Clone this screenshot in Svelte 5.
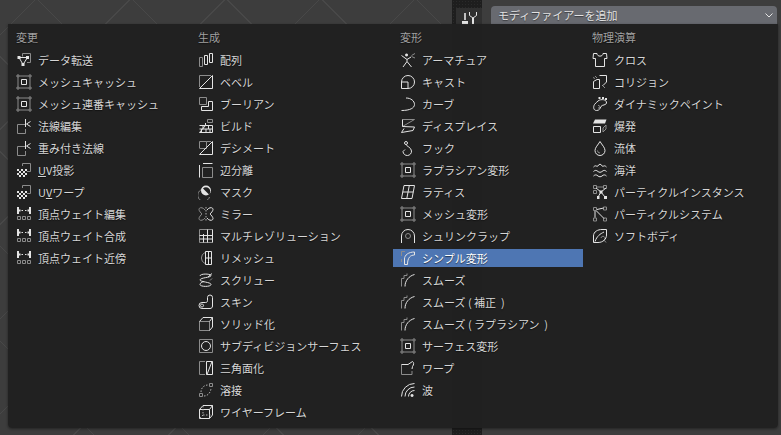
<script>
	// d = bright strokes, dim = grey strokes, fill = solid shapes
	const icons = {
		transfer: { dim: 'M6.5 4.5V1.5H14.5V10.5H11', d: 'M3 5.5H11.5L7 12.5Z', fill: 'M1.5 4h3v3h-3zM10 4h3v3h-3zM5.5 11h3v3h-3z' },
		mesh: { dim: 'M3.5 2H12.5M14 3.5V12.5M12.5 14H3.5M2 12.5V3.5M1 1h2v2H1zM13 1h2v2h-2zM13 13h2v2h-2zM1 13h2v2H1z', d: 'M5.5 5.5h5v5h-5z' },
		normal: { dim: 'M9.5 6.5H1.5V15.5H9.5V11', d: 'M9.5 1V9M14.5 3.5L10.5 6L14.5 8.5' },
		uv: { dim: 'M6.5 4V1.5H14.5V9.5H11', fill: 'M1 7h2v2H1zM5 7h2v2H5zM9 7h2v2H9zM3 9h2v2H3zM7 9h2v2H7zM1 11h2v2H1zM5 11h2v2H5zM9 11h2v2H9zM3 13h2v2H3zM7 13h2v2H7z' },
		weight: { d: 'M5.5 4.5H7M9 4.5H10.5', dim: 'M1.5 10.5h3v3h-3zM6.5 10.5h3v3h-3zM11.5 10.5h3v3h-3z', fill: 'M1 1h2v7H1zM13 1h2v7h-2zM3 3.5h1.5v2H3zM11.5 3.5H13v2h-1.5z' },
		array: { dim: 'M1.5 5.5h3v9h-3z', d: 'M6.5 3.5h3v9h-3zM11.5 1.5h3v9h-3z' },
		bevel: { dim: 'M1.5 13V1.5H13', d: 'M1.5 14.5L14.5 1.5V14.5Z' },
		boolean: { dim: 'M1.5 1.5h7v7h-7z', d: 'M10.5 5.5H14.5V14.5H3.5V10.5H10.5Z' },
		build: { dim: 'M9.5 1.5h5v3h-5z', d: 'M1.5 7.5H7.5V5M7.5 7.5H14.5V14.5H1.5ZM1.5 11H14.5M5 7.5V11M10.5 7.5V11M3.5 11V14.5M8 11V14.5M12 11V14.5' },
		decimate: { dim: 'M1.5 8V1.5H8.5V8.5H1.5M8.5 1.5H13', d: 'M1.5 14.5L14.5 1.5V14.5Z' },
		split: { dim: 'M4.5 5.5H14.5V15.5H4.5Z', d: 'M1.5 3V15.5M5 1.5H14.5' },
		maskIcon: { dim: 'M4 5.5A6 6 0 1 0 11.5 13', fill: 'M8 1.5A5 5 0 1 1 8 11.5A5 5 0 0 1 8 1.5ZM5 4.5L11 10.5A4 4 0 0 0 5 4.5Z' },
		mirror: { dim: 'M7 4C5 1 1 1 1 3.5C1 5 3 7 4 8C3 9 1 11 1 12.5C1 15 5 15 7 12', d: 'M9 4C11 1 15 1 15 3.5C15 5 13 7 12 8C13 9 15 11 15 12.5C15 15 11 15 9 12', dots: 'M8 1V15' },
		multires: { dim: 'M1.5 1.5H14.5M1.5 1.5V14.5H14.5', d: 'M9.5 1.5V14.5M14.5 1.5V14.5M5.5 6V14.5M1.5 7.5H14.5M1.5 11H14.5' },
		remesh: { dim: 'M7 2.5A6 6 0 0 0 7 13.5', d: 'M7.5 1.5H13.5V14.5H7.5ZM7.5 8H13.5M10.5 1.5V14.5' },
		screw: { d: 'M2 4C2 1.5 12 1.5 13 3.5C14 5.5 2 5.5 2 8C2 10 13 10 13 12.5C13 15 2 15 2 12.5C2 11 4 10 6 9.5M14 1.5L10 5', dim: 'M14 6.5L12 8.5' },
		skin: { d: 'M9.5 3.5A2.5 2.5 0 0 1 14.5 3.5V12C14.5 13.5 13.5 14.5 12 14.5H4A2.7 2.7 0 0 1 4 8.5H7.5C8.8 8.5 9.5 8 9.5 6.5ZM4 10a1.5 1.5 0 1 0 0.1 0' },
		solidify: { dim: 'M1.5 5.5H11.5V14.5H1.5Z', d: 'M1.5 5.5L5 1.5H14.5V11L11.5 14.5M11.5 5.5L14.5 1.5' },
		subsurf: { dim: 'M1.5 1.5h13v13h-13z', d: 'M8 3.5A4.5 4.5 0 1 1 8 12.5A4.5 4.5 0 0 1 8 3.5Z' },
		triangulate: { dim: 'M7 1.5H1.5V14.5H7', d: 'M8.5 1.5H14.5V14.5H8.5ZM9 14.5L14 1.5' },
		weld: { dim: 'M1.5 11.5h3v3h-3zM11.5 1.5h3v3h-3z', dots: 'M3 10C3 6 6 3 10 3M6 14C10 14 13 10 13 6' },
		wire: { d: 'M1.5 5.5H11.5V14.5H1.5ZM1.5 5.5L5 1.5H14.5V11L11.5 14.5M11.5 5.5L14.5 1.5', dots: 'M5 2V11H14M5 11L2 14' },
		armature: { d: 'M1.5 3.5L7 7.5L11 5M7 7.5V9.5L3 15M7 9.5L11.5 15', dim: 'M11.5 3.5L15 1.5M11.5 4.5L15 6', fill: 'M6.5 1.5a1.5 1.5 0 1 0 .1 0' },
		cast: { d: 'M1.5 8A6.5 6.5 0 1 1 8 14.5H1.5V8H8V14.5' },
		curve: { d: 'M6 2C11 2 14.5 5 14.5 8.5C14.5 12 10 14.5 1.5 14.5' },
		displace: { dim: 'M2.5 1.5H14.5L2.5 8.5', d: 'M2.5 1.5V8.5L14.5 9L13 12.5L1.5 14.5L4 10.5' },
		hook: { d: 'M6 1.5A1.5 1.5 0 1 1 6 4.5A1.5 1.5 0 0 1 6 1.5ZM6 4.5C6 6 11.5 7.5 11.5 11A4.2 4.2 0 0 1 3 11.5L5 9.5' },
		lattice: { d: 'M4 1.5H14.5L12 14.5H1.5ZM9.3 1.5L6.8 14.5M2.8 8H13.3' },
		shrinkwrap: { d: 'M1.5 15V8A6.5 6.5 0 0 1 14.5 8V15', dim: 'M8 5.5A2.5 2.5 0 1 1 8 10.5A2.5 2.5 0 0 1 8 5.5Z' },
		simple: { d: 'M4.5 14.5V9C4.5 5 8.5 2 14.5 2V5C10.5 5 7.5 7.5 7.5 14.5Z', dim: 'M1.5 6V1.5H5M1.5 9V12' },
		smooth: { dim: 'M1.5 14.5V6.5H4V3.5H7V1.5', d: 'M5 14.5C5 8.5 9 4 14.5 2.5' },
		warp: { dim: 'M1.5 4.5V14.5H12V11', d: 'M1.5 4.5H8L12.5 1.5C14 2.5 14 4.5 12.5 6.5L12 9' },
		wave: { d: 'M1.5 14.5A13 13 0 0 1 14.5 1.5M5 14.5A9.5 9.5 0 0 1 14.5 5M8.5 14.5A6 6 0 0 1 14.5 8.5', fill: 'M12 12a1.5 1.5 0 1 0 .1 0' },
		cloth: { d: 'M5 1.5H1.5L1 6.5H3.5V14.5H12.5V6.5H15L14.5 1.5H11C11 5 5 5 5 1.5Z' },
		collision: { d: 'M1.5 7.5L5 5.5H7.5V14.5H1.5ZM7.5 1.5H14.5V8L11 11.5', dim: 'M3 2L5 4M1 3.5L3 4.5M10 11L13 14' },
		paint: { d: 'M6 5C9 2.5 15 3.5 14.5 7C14.2 9.5 10 8.5 9 10.5C8 12.5 7.5 14.5 4.5 14.5C1.5 14.5 1 11 2.5 8.5C3.5 7 5 6 6 5Z', dim: 'M6 9.5A1.3 1.3 0 1 1 6 12', fill: 'M6.5 1h2v2h-2zM10 1h2v2h-2zM13 2h2v2h-2z' },
		explode: { fill: 'M3 1.5H14.5L13 5.5H1Z', d: 'M1.5 8.5H8.5V14.5H1.5Z', dim: 'M14 7L11 10V14L14 11Z' },
		fluid: { d: 'M8 1.5C10 5 13 7.5 13 10.5A5 5 0 0 1 3 10.5C3 7.5 6 5 8 1.5Z', dim: 'M5.5 10.5A2.5 2.5 0 0 0 8 13' },
		ocean: { d: 'M1.5 5C3 3.5 4 3.5 5 4.5L8 2L11 4.5C12 3.5 13 3.5 14.5 5M1.5 9.5C3 8 4.5 8 6 9.5C7 10.5 9 10.5 10 9.5C11.5 8 13 8 14.5 9.5M1.5 14C3 12.5 4.5 12.5 6 14C7 15 9 15 10 14C11.5 12.5 13 12.5 14.5 14' },
		instance: { dim: 'M1.5 1.5h3v3h-3zM11.5 1.5h3v3h-3zM1.5 6.5h3v3h-3zM4.5 3H11.5', d: 'M4 4L9 8L14 4M9 8L13 13M9 8L6 13', fill: 'M7.5 6.5h3v3h-3zM5 12h2.5v3H5zM12 12h3v3h-3z' },
		particle: { d: 'M4.5 5L12 12.5M3 5V11.5M5 3.5L11.5 2', dim: 'M1.5 1.5h3v3h-3zM11.5 1h3v3h-3zM1.5 12h3v3h-3zM11.5 12h3v3h-3z' },
		soft: { d: 'M1.5 14.5V8C1.5 3.5 6 1.5 10 1.5H14.5V7C14.5 11 11 14.5 6 14.5ZM3 13.5C5 8 8 6 12 4', dim: 'M9 10A2 2 0 1 1 12 12L14 14.5' }
	};

	const columns = [
		{
			title: '変更',
			items: [
				['データ転送', 'transfer'], ['メッシュキャッシュ', 'mesh'], ['メッシュ連番キャッシュ', 'mesh'],
				['法線編集', 'normal'], ['重み付き法線', 'normal'], ['UV投影', 'uv', 0], ['UVワープ', 'uv', 1],
				['頂点ウェイト編集', 'weight'], ['頂点ウェイト合成', 'weight'], ['頂点ウェイト近傍', 'weight']
			]
		},
		{
			title: '生成',
			items: [
				['配列', 'array'], ['ベベル', 'bevel'], ['ブーリアン', 'boolean'], ['ビルド', 'build'], ['デシメート', 'decimate'],
				['辺分離', 'split'], ['マスク', 'maskIcon'], ['ミラー', 'mirror'], ['マルチレゾリューション', 'multires'],
				['リメッシュ', 'remesh'], ['スクリュー', 'screw'], ['スキン', 'skin'], ['ソリッド化', 'solidify'],
				['サブディビジョンサーフェス', 'subsurf'], ['三角面化', 'triangulate'], ['溶接', 'weld'], ['ワイヤーフレーム', 'wire']
			]
		},
		{
			title: '変形',
			items: [
				['アーマチュア', 'armature'], ['キャスト', 'cast'], ['カーブ', 'curve'], ['ディスプレイス', 'displace'], ['フック', 'hook'],
				['ラプラシアン変形', 'mesh'], ['ラティス', 'lattice'], ['メッシュ変形', 'mesh'], ['シュリンクラップ', 'shrinkwrap'],
				['シンプル変形', 'simple'], ['スムーズ', 'smooth'], ['スムーズ ( 補正  )', 'smooth'], ['スムーズ ( ラプラシアン  )', 'smooth'],
				['サーフェス変形', 'mesh'], ['ワープ', 'warp'], ['波', 'wave']
			]
		},
		{
			title: '物理演算',
			items: [
				['クロス', 'cloth'], ['コリジョン', 'collision'], ['ダイナミックペイント', 'paint'], ['爆発', 'explode'], ['流体', 'fluid'],
				['海洋', 'ocean'], ['パーティクルインスタンス', 'instance'], ['パーティクルシステム', 'particle'], ['ソフトボディ', 'soft']
			]
		}
	];

	const active = 'シンプル変形';
</script>

<div class="stage">
	<div class="tabs"></div>
	<div class="tab">
		<svg width="16" height="16" viewBox="0 0 16 16">
			<path class="ic-fill" d="M1 11h6v4H1zM3.2 3h1.6v7H3.2zM11 8h2v7h-2z" />
			<path class="ic" d="M8.5 2V5.5L12 8L15.5 5.5V2" stroke-width="1.6" />
		</svg>
	</div>
	<div class="add-btn">
		<span>モディファイアーを追加</span>
		<svg width="10" height="10" viewBox="0 0 10 10"><path class="ic" d="M1.5 3.5L5 7L8.5 3.5" stroke-width="1.3" /></svg>
	</div>

	<div class="popup">
		{#each columns as col}
			<div class="col">
				<div class="head">{col.title}</div>
				{#each col.items as [label, icon, ul]}
					{@const g = icons[icon]}
					<div class="item" class:active={label === active}>
						<svg class="icon" width="16" height="16" viewBox="0 0 16 16">
							{#if g.dim}<path class="ic dim" d={g.dim} />{/if}
							{#if g.d}<path class="ic" d={g.d} />{/if}
							{#if g.dots}<path class="ic dots" d={g.dots} />{/if}
							{#if g.fill}<path class="ic-fill" d={g.fill} />{/if}
						</svg>
						{#if ul !== undefined}
							<span class="label">{#if ul === 0}<u>U</u>V{:else}U<u>V</u>{/if}{label.slice(2)}</span>
						{:else}
							<span class="label">{label}</span>
						{/if}
					</div>
				{/each}
			</div>
		{/each}
	</div>
</div>

<style>
	:global(body) {
		margin: 0;
		background: #3d3d3d;
	}

	.stage {
		position: relative;
		width: 781px;
		height: 435px;
		overflow: hidden;
		background-color: #3d3d3d;
		background-image:
			repeating-linear-gradient(45deg, transparent 0 66px, #484848 66px 67px),
			repeating-linear-gradient(-45deg, transparent 0 66px, #484848 66px 67px);
		background-size: 452px 435px;
		background-repeat: no-repeat;
		font-family: 'Noto Sans CJK JP', 'Liberation Sans', sans-serif;
		font-size: 11px;
	}

	.tabs {
		position: absolute;
		left: 452px;
		top: 0;
		width: 30px;
		height: 435px;
		background-color: #1e1e1e;
		background-image: radial-gradient(#2a2a2a 0.6px, transparent 0.7px);
		background-size: 3px 3px;
	}

	.tab {
		position: absolute;
		left: 456px;
		top: 8px;
		width: 26px;
		height: 16px;
		background: #303030;
		display: flex;
		justify-content: center;
		padding-top: 2px;
		box-sizing: border-box;
	}

	.add-btn {
		position: absolute;
		left: 491px;
		top: 6px;
		width: 286px;
		height: 18px;
		box-sizing: border-box;
		padding: 0 3px 0 7px;
		border-radius: 4px 4px 0 0;
		background: #686a70;
		color: #e2e2e2;
		display: flex;
		align-items: center;
		justify-content: space-between;
		text-shadow: 0 1px 1px rgba(0, 0, 0, 0.45);
	}

	.popup {
		position: absolute;
		left: 8px;
		top: 24px;
		width: 770px;
		height: 404px;
		box-sizing: border-box;
		padding: 4px 2px 4px 1px;
		border-radius: 0 0 4px 4px;
		background: rgba(33, 33, 33, 0.985);
		box-shadow: 0 1px 3px rgba(0, 0, 0, 0.45);
		display: grid;
		grid-template-columns: 182px 202px 192px 1fr;
	}

	.col {
		display: flex;
		flex-direction: column;
		gap: 4px;
	}

	.head {
		height: 18px;
		line-height: 18px;
		margin-bottom: 1px;
		padding-left: 7px;
		color: #a0a0a0;
		text-shadow: 0 1px 1px rgba(0, 0, 0, 0.5);
	}

	.item {
		display: flex;
		align-items: center;
		gap: 6px;
		height: 18px;
		box-sizing: border-box;
		padding-left: 7px;
		color: #d6d6d6;
		text-shadow: 0 1px 1px rgba(0, 0, 0, 0.55);
	}

	.item.active {
		width: 190px;
		background: #4e76b3;
		color: #fff;
	}

	.label {
		white-space: pre;
	}

	.icon {
		flex: none;
	}

	.ic {
		fill: none;
		stroke: #e4e4e4;
		stroke-width: 1;
	}

	.ic.dim {
		stroke: #8c8c8c;
	}

	.ic.dots {
		stroke: #b0b0b0;
		stroke-dasharray: 1.5 1.5;
	}

	.ic-fill {
		fill: #e4e4e4;
		fill-rule: evenodd;
	}
</style>
